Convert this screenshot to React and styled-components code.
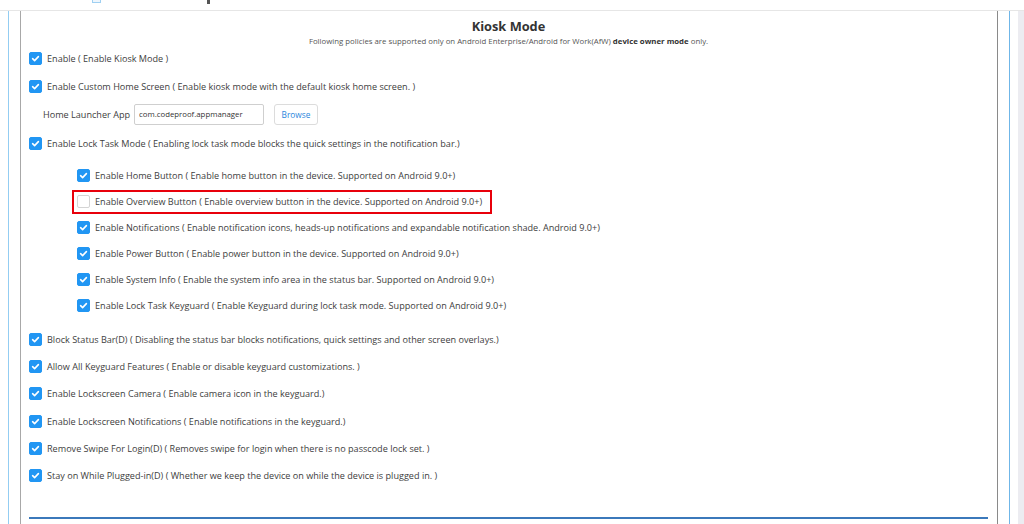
import React from 'react';
import styled, { createGlobalStyle } from 'styled-components';

const GlobalStyle = createGlobalStyle`
  html, body {
    margin: 0;
    padding: 0;
    background: #fff;
    font-family: "Open Sans", "Liberation Sans", sans-serif;
    color: #3a3a3a;
  }
  * { box-sizing: border-box; }
`;

const Page = styled.div`
  width: 1024px;
  height: 524px;
  overflow: hidden;
  display: flex;
  flex-direction: column;
`;

const TopStrip = styled.div`
  height: 11px;
  border-bottom: 1px solid #e6e6e6;
  display: flex;
  align-items: flex-start;
  padding-left: 92px;
  overflow: hidden;
`;

const StripBox = styled.span`
  width: 9px;
  height: 3px;
  border: 1px solid #9fd0f2;
  border-top: none;
  background: #eef6fd;
`;

const StripGlyph = styled.span`
  width: 3px;
  height: 4px;
  margin-left: 106px;
  background: #555;
`;

const Body = styled.div`
  flex: 1;
  display: flex;
  min-height: 0;
`;

const Main = styled.div`
  width: 1018px;
  padding-left: 8px;
  display: flex;
`;

const ScrollTrack = styled.div`
  width: 6px;
  background: #ececf1;
`;

const Outer = styled.div`
  width: 1002px;
  border-left: 1px solid #93cdf2;
  border-right: 1px solid #6fb6e8;
  padding-left: 11px;
`;

const Panel = styled.section`
  width: 978px;
  height: 100%;
  border-left: 1px solid #a8a8a8;
  border-right: 1px solid #8a8a8a;
  padding: 0 9px 0 8px;
  display: flex;
  flex-direction: column;
`;

const Header = styled.header`
  padding-top: 6px;
  text-align: center;
`;

const Title = styled.h2`
  margin: 0;
  font-size: 12.8px;
  line-height: 18px;
  font-weight: 700;
  color: #333;
`;

const Subtitle = styled.p`
  margin: 0;
  font-size: 7.8px;
  line-height: 12px;
  color: #555;
  b { color: #333; }
`;

const Row = styled.label`
  display: flex;
  align-items: center;
  gap: 5px;
  height: 20px;
  margin-top: ${p => p.mt || 7.4}px;
  font-size: 9.1px;
  color: #3d3d3d;
  white-space: nowrap;
`;

const Box = styled.span`
  width: 13px;
  height: 13px;
  flex: none;
  border-radius: 2px;
  display: flex;
  align-items: center;
  justify-content: center;
  background: ${p => (p.checked ? '#2196f3' : '#fff')};
  border: 1px solid ${p => (p.checked ? '#2196f3' : '#d4d4d4')};
`;

const LauncherRow = styled.div`
  display: flex;
  align-items: center;
  height: 22px;
  margin-top: 7px;
  padding-left: 14px;
`;

const LauncherLabel = styled.span`
  font-size: 9.1px;
  color: #3d3d3d;
  margin-right: 4px;
`;

const TextInput = styled.input`
  width: 130px;
  height: 21px;
  border: 1px solid #cfcfcf;
  border-radius: 2px;
  padding: 0 4px;
  font-family: inherit;
  font-size: 7.8px;
  color: #333;
  outline: none;
`;

const BrowseButton = styled.button`
  width: 44px;
  height: 21px;
  margin-left: 10px;
  background: #fff;
  border: 1px solid #dcdcdc;
  border-radius: 3px;
  font-family: inherit;
  font-size: 8.3px;
  color: #2a86dc;
  padding: 0;
`;

const Nested = styled.div`
  margin-top: 10px;
  margin-left: 43px;
  display: flex;
  flex-direction: column;
  gap: 2px;
`;

const SubRow = styled.label`
  display: flex;
  align-items: center;
  gap: 5px;
  width: fit-content;
  height: 24px;
  padding: 0 8px 0 ${p => (p.highlight ? 3 : 5)}px;
  border: ${p => (p.highlight ? '2px solid #e8000b' : 'none')};
  font-size: 9.1px;
  color: #3d3d3d;
  white-space: nowrap;
`;

const Divider = styled.hr`
  margin: 30.6px 0 0;
  height: 2px;
  border: none;
  background: #3b79bb;
`;

const Check = ({ checked = true }) => (
  <Box checked={checked}>
    {checked && (
      <svg width="9" height="9" viewBox="0 0 9 9">
        <path d="M1.6 4.7 L3.6 6.6 L7.4 2.6" fill="none" stroke="#fff" strokeWidth="1.6" strokeLinecap="round" strokeLinejoin="round" />
      </svg>
    )}
  </Box>
);

const subItems = [
  { text: 'Enable Home Button ( Enable home button in the device. Supported on Android 9.0+)', checked: true },
  { text: 'Enable Overview Button ( Enable overview button in the device. Supported on Android 9.0+)', checked: false, highlight: true },
  { text: 'Enable Notifications ( Enable notification icons, heads-up notifications and expandable notification shade. Android 9.0+)', checked: true },
  { text: 'Enable Power Button ( Enable power button in the device. Supported on Android 9.0+)', checked: true },
  { text: 'Enable System Info ( Enable the system info area in the status bar. Supported on Android 9.0+)', checked: true },
  { text: 'Enable Lock Task Keyguard ( Enable Keyguard during lock task mode. Supported on Android 9.0+)', checked: true },
];

const lowerItems = [
  'Block Status Bar(D) ( Disabling the status bar blocks notifications, quick settings and other screen overlays.)',
  'Allow All Keyguard Features ( Enable or disable keyguard customizations. )',
  'Enable Lockscreen Camera ( Enable camera icon in the keyguard.)',
  'Enable Lockscreen Notifications ( Enable notifications in the keyguard.)',
  'Remove Swipe For Login(D) ( Removes swipe for login when there is no passcode lock set. )',
  'Stay on While Plugged-in(D) ( Whether we keep the device on while the device is plugged in. )',
];

const App = () => (
  <>
    <GlobalStyle />
    <Page>
      <TopStrip>
        <StripBox />
        <StripGlyph />
      </TopStrip>
      <Body>
        <Main>
          <Outer>
            <Panel>
              <Header>
                <Title>Kiosk Mode</Title>
                <Subtitle>
                  Following policies are supported only on Android Enterprise/Android for Work(AfW) <b>device owner mode</b> only.
                </Subtitle>
              </Header>

              <Row mt={1.5}>
                <Check />
                Enable ( Enable Kiosk Mode )
              </Row>
              <Row mt={7.5}>
                <Check />
                Enable Custom Home Screen ( Enable kiosk mode with the default kiosk home screen. )
              </Row>
              <LauncherRow>
                <LauncherLabel>Home Launcher App</LauncherLabel>
                <TextInput defaultValue="com.codeproof.appmanager" />
                <BrowseButton type="button">Browse</BrowseButton>
              </LauncherRow>
              <Row mt={8.5}>
                <Check />
                Enable Lock Task Mode ( Enabling lock task mode blocks the quick settings in the notification bar.)
              </Row>

              <Nested>
                {subItems.map(item => (
                  <SubRow key={item.text} highlight={item.highlight}>
                    <Check checked={item.checked} />
                    {item.text}
                  </SubRow>
                ))}
              </Nested>

              {lowerItems.map((text, i) => (
                <Row key={text} mt={i === 0 ? 11.5 : 7.4}>
                  <Check />
                  {text}
                </Row>
              ))}

              <Divider />
            </Panel>
          </Outer>
        </Main>
        <ScrollTrack />
      </Body>
    </Page>
  </>
);

export default App;
